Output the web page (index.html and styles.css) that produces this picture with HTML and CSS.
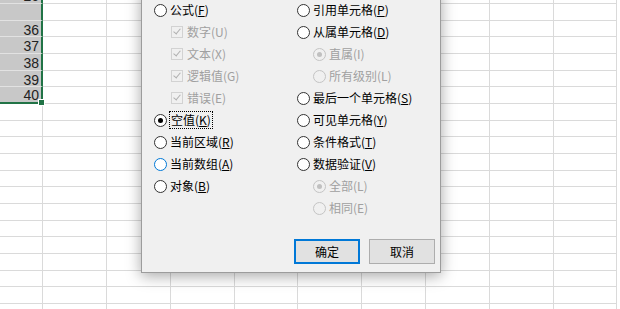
FILE: index.html
```html
<!DOCTYPE html>
<html>
<head>
<meta charset="utf-8">
<title>定位条件</title>
<link rel="stylesheet" href="styles.css">
</head>
<body>
<div class="sheet">
  <div class="grid" id="grid"></div>

  <div class="dialog">
    <div class="options">
      <div class="col">
        <div class="opt"><span class="radio"></span><span>公式(<u>F</u>)</span></div>
        <div class="opt sub off"><span class="check"></span><span>数字(U)</span></div>
        <div class="opt sub off"><span class="check"></span><span>文本(X)</span></div>
        <div class="opt sub off"><span class="check"></span><span>逻辑值(G)</span></div>
        <div class="opt sub off"><span class="check"></span><span>错误(E)</span></div>
        <div class="opt"><span class="radio on"></span><span class="focus">空值(<u>K</u>)</span></div>
        <div class="opt"><span class="radio"></span><span>当前区域(<u>R</u>)</span></div>
        <div class="opt"><span class="radio hover"></span><span>当前数组(<u>A</u>)</span></div>
        <div class="opt"><span class="radio"></span><span>对象(<u>B</u>)</span></div>
      </div>
      <div class="col">
        <div class="opt"><span class="radio"></span><span>引用单元格(<u>P</u>)</span></div>
        <div class="opt"><span class="radio"></span><span>从属单元格(<u>D</u>)</span></div>
        <div class="opt sub off"><span class="radio on"></span><span>直属(I)</span></div>
        <div class="opt sub off"><span class="radio"></span><span>所有级别(L)</span></div>
        <div class="opt"><span class="radio"></span><span>最后一个单元格(<u>S</u>)</span></div>
        <div class="opt"><span class="radio"></span><span>可见单元格(<u>Y</u>)</span></div>
        <div class="opt"><span class="radio"></span><span>条件格式(<u>T</u>)</span></div>
        <div class="opt"><span class="radio"></span><span>数据验证(<u>V</u>)</span></div>
        <div class="opt sub off"><span class="radio on"></span><span>全部(L)</span></div>
        <div class="opt sub off"><span class="radio"></span><span>相同(E)</span></div>
      </div>
    </div>
    <div class="buttons">
      <button class="btn default">确定</button>
      <button class="btn">取消</button>
    </div>
  </div>
</div>

<script>
  // fill the sheet: column A holds the selected numbers, one blank cell
  var values = {0: "26", 2: "36", 3: "37", 4: "38", 5: "39", 6: "40"};
  var grid = document.getElementById("grid");
  for (var r = 0; r < 22; r++) {
    for (var c = 0; c < 10; c++) {
      var cell = document.createElement("div");
      cell.className = "cell";
      if (c === 0 && r <= 6) {
        cell.className += " sel";
        if (values[r]) cell.textContent = values[r];
        if (r === 6) cell.className += " last";
      }
      grid.appendChild(cell);
    }
  }
</script>
</body>
</html>
```

FILE: styles.css
```css
/* sheet behind the go-to-special dialog */

body
{ margin: 0;
  background: #fff;
  overflow: hidden;
}

.sheet
{ position: relative;
  width: 620px;
  height: 309px;
  overflow: hidden;
}

.grid
{ display: grid;
  grid-template-columns: 43px 64px 64px 64px 63px 64px 64px 64px 64px 63px;
  grid-template-rows: 17px repeat(7, 17px 16px 17px);
  margin-top: -13px;
}

.cell
{ border-right: 1px solid #dadada;
  border-bottom: 1px solid #dadada;
  box-sizing: border-box;
  font-family: "Liberation Sans", Arial, sans-serif;
  font-size: 14px;
  line-height: 16px;
  padding-top: 1px;
  text-align: right;
  padding-right: 2px;
  color: #222;
  overflow: visible;
  white-space: nowrap;
}

.cell.sel
{ background: #c8c8c8;
  border-bottom-color: #e2e2e2;
  border-right: 2px solid #217346;
}

.cell.sel.last
{ border-bottom: 2px solid #217346;
  position: relative;
  line-height: 15px;
}

.cell.sel.last::after
{ content: "";
  position: absolute;
  right: -4px;
  bottom: -4px;
  width: 5px;
  height: 5px;
  background: #217346;
  border: 1px solid #fff;
}

/* dialog */

.dialog
{ position: absolute;
  left: 141px;
  top: -10px;
  width: 298px;
  height: 281px;
  background: #f0f0f0;
  border: 1px solid #9c9c9c;
  box-shadow: 0 3px 14px rgba(0, 0, 0, 0.35);
  font-family: "Noto Sans CJK SC", sans-serif;
  font-size: 12px;
  color: #000;
  display: flex;
  flex-direction: column;
}

.options
{ display: flex;
  padding: 8px 0 0 12px;
}

.col
{ display: flex;
  flex-direction: column;
  width: 145px;
}

.opt
{ display: flex;
  align-items: center;
  height: 22px;
  line-height: 16px;
  white-space: nowrap;
}

.opt u
{ text-decoration-thickness: 1px;
  text-underline-offset: 1px;
}

.opt.sub
{ padding-left: 16px;
}

.opt.off
{ color: #a0a0a0;
}

.radio
{ width: 11px;
  height: 11px;
  border: 1px solid #333;
  border-radius: 50%;
  background: #fff;
  margin-right: 3px;
  position: relative;
  flex: none;
}

.radio.on::after
{ content: "";
  position: absolute;
  left: 3px;
  top: 3px;
  width: 5px;
  height: 5px;
  border-radius: 50%;
  background: #000;
}

.radio.hover
{ border-color: #0078d7;
}

.off .radio
{ border-color: #c4c4c4;
  background: #f0f0f0;
}

.off .radio.on::after
{ background: #c0c0c0;
}

.check
{ width: 10px;
  height: 10px;
  border: 1px solid #d2d2d2;
  margin: 0 4px 0 1px;
  position: relative;
  flex: none;
}

.check::after
{ content: "";
  position: absolute;
  left: 3px;
  top: 0px;
  width: 3px;
  height: 6px;
  border-right: 1px solid #b0b0b0;
  border-bottom: 1px solid #b0b0b0;
  transform: rotate(40deg);
}

.focus
{ outline: 1px dotted #000;
  outline-offset: 0;
  padding: 0 1px;
}

.buttons
{ display: flex;
  justify-content: flex-end;
  gap: 9px;
  margin-top: auto;
  padding: 0 5px 8px 0;
}

.btn
{ width: 66px;
  height: 25px;
  background: #e1e1e1;
  border: 1px solid #adadad;
  font-family: "Noto Sans CJK SC", sans-serif;
  font-size: 12px;
  color: #000;
  padding: 0;
}

.btn.default
{ border: 2px solid #0078d7;
}
```
